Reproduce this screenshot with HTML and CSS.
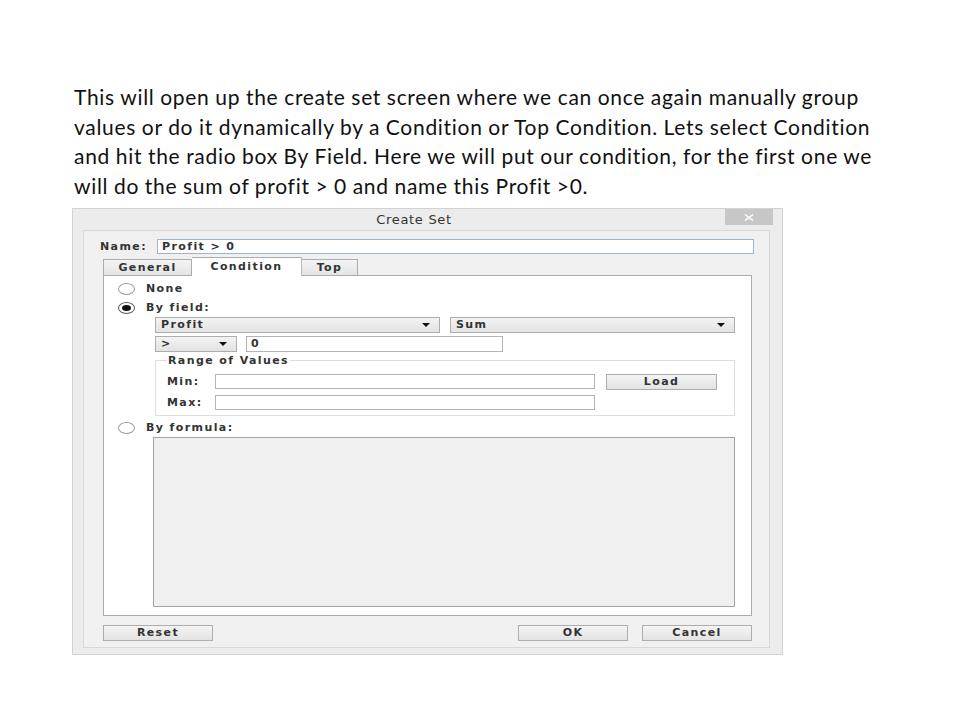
FILE: index.html
```html
<!DOCTYPE html>
<html>
<head>
<meta charset="utf-8">
<link rel="stylesheet" href="styles.css">
</head>
<body>
<p class="caption">
<span>This will open up the create set screen where we can once again manually group</span>
<span>values or do it dynamically by a Condition or Top Condition. Lets select Condition</span>
<span>and hit the radio box By Field. Here we will put our condition, for the first one we</span>
<span>will do the sum of profit &gt; 0 and name this Profit &gt;0.</span>
</p>
<div class="dialog">
  <div class="titlebar">
    <span class="title">Create Set</span>
    <span class="close"><svg width="10" height="7" viewBox="0 0 10 7"><path d="M1 0.5 L9 6.5 M9 0.5 L1 6.5" stroke="#fff" stroke-width="1.4" fill="none"/></svg></span>
  </div>
  <div class="client">
    <div class="name-row">
      <span class="name-label">Name:</span>
      <div class="input name-input">Profit &gt; 0</div>
    </div>
    <div class="tabs">
      <div class="tab tab-general">General</div>
      <div class="tab tab-condition active">Condition</div>
      <div class="tab tab-top">Top</div>
    </div>
    <div class="panel">
      <div class="radio-row"><span class="radio"></span><span>None</span></div>
      <div class="radio-row"><span class="radio on"></span><span>By field:</span></div>
      <div class="field-row first">
        <div class="select wide">Profit</div>
        <div class="select wide">Sum</div>
      </div>
      <div class="field-row second">
        <div class="select op">&gt;</div>
        <div class="input value">0</div>
      </div>
      <div class="group">
        <span class="group-title">Range of Values</span>
        <div class="range-row">
          <span class="range-label">Min:</span>
          <div class="input range-input"></div>
          <div class="btn load">Load</div>
        </div>
        <div class="range-row">
          <span class="range-label">Max:</span>
          <div class="input range-input"></div>
        </div>
      </div>
      <div class="radio-row formula-row"><span class="radio"></span><span>By formula:</span></div>
      <div class="formula"></div>
    </div>
    <div class="buttons">
      <div class="btn">Reset</div>
      <span class="spacer"></span>
      <div class="btn">OK</div>
      <div class="btn">Cancel</div>
    </div>
  </div>
</div>
</body>
</html>
```
FILE: styles.css
```css
* { box-sizing: border-box; }
body { margin: 0; background: #fff; }

.caption {
  margin: 82px 0 0 74px;
  font-family: Lato, "Open Sans", sans-serif;
  font-size: 21px;
  letter-spacing: 0.7px;
  word-spacing: -0.3px;
  line-height: 29.6px;
  color: #111;
}
.caption span { display: block; white-space: nowrap; }

.dialog {
  margin: 8px 0 0 72px;
  width: 711px;
  height: 447px;
  background: #ececec;
  border: 1px solid #d2d2d2;
  display: flex;
  flex-direction: column;
  font-family: "DejaVu Sans", sans-serif;
  font-size: 11px;
  font-weight: bold;
  color: #333;
  letter-spacing: 1.4px;
}

.titlebar { height: 21px; display: flex; align-items: flex-start; }
.title {
  flex: 1;
  text-align: center;
  padding-left: 30px;
  font-weight: normal;
  font-size: 13px;
  line-height: 21px;
  letter-spacing: 0.7px;
  color: #333;
}
.close {
  width: 48px;
  height: 16px;
  margin-right: 9px;
  background: #c7c7c7;
  display: flex;
  align-items: center;
  justify-content: center;
}

.client {
  flex: 1;
  margin: 0 12px 6px 10px;
  background: #f0f0f0;
  border: 1px solid #d8d8d8;
  padding: 8px 17px 0 19px;
  display: flex;
  flex-direction: column;
}

.name-row { display: flex; height: 15px; margin-left: -3px; margin-right: -2px; align-items: center; }
.name-label { width: 57px; line-height: 15px; }
.input {
  height: 15px;
  background: #fff;
  border: 1px solid #b4b4b4;
  padding: 0 4px;
  line-height: 13px;
}
.name-input { flex: 1; border-color: #a3b4c9; }

.tabs { display: flex; align-items: flex-end; height: 18px; margin-top: 3px; }
.tab {
  height: 16px;
  border: 1px solid #acacac;
  border-bottom: none;
  background: linear-gradient(#f4f4f4, #e4e4e4);
  text-align: center;
  line-height: 15px;
}
.tab-general { width: 89px; }
.tab-condition { width: 110px; border-left: none; }
.tab-top { width: 56px; border-left: none; }
.tab.active {
  height: 19px;
  margin-bottom: -1px;
  background: #fff;
  border-right-color: #b8b8b8;
  line-height: 17px;
  position: relative;
  z-index: 1;
}

.panel {
  height: 341px;
  background: #fff;
  border: 1px solid #acacac;
  padding: 3px 16px 0 14px;
  display: flex;
  flex-direction: column;
}

.radio-row { display: flex; align-items: center; height: 19px; gap: 11px; }
.radio {
  width: 17px;
  height: 12px;
  border-radius: 50%;
  border: 1px solid #9a9a9a;
  background: #fff;
  display: flex;
  align-items: center;
  justify-content: center;
}
.radio.on { border-color: #5a5a5a; }
.radio.on::after {
  content: "";
  width: 9px;
  height: 6px;
  border-radius: 50%;
  background: #111;
}

.field-row { display: flex; margin-left: 37px; height: 16px; }
.field-row.second { margin-top: 3px; gap: 9px; }
.field-row.first { gap: 10px; }

.select {
  height: 16px;
  border: 1px solid #adadad;
  background: linear-gradient(#f3f3f3, #e3e3e3);
  display: flex;
  align-items: center;
  justify-content: space-between;
  padding: 0 9px 0 5px;
  line-height: 14px;
}
.select::after {
  content: "";
  width: 0;
  height: 0;
  border-left: 4px solid transparent;
  border-right: 4px solid transparent;
  border-top: 4px solid #111;
}
.select.wide { flex: 1; }
.select.op { width: 82px; }
.input.value { width: 257px; height: 16px; line-height: 14px; }

.group {
  margin: 8px 0 0 37px;
  border: 1px solid #dedede;
  padding: 0 0 5px 11px;
  display: flex;
  flex-direction: column;
}
.group-title {
  align-self: flex-start;
  margin: -7px 0 0 0;
  padding: 0 1px;
  background: #fff;
  line-height: 14px;
}
.range-row { display: flex; align-items: flex-start; margin-top: 6px; height: 15px; }
.range-label { width: 48px; line-height: 15px; }
.range-input { width: 380px; }
.btn {
  height: 16px;
  width: 110px;
  border: 1px solid #adadad;
  background: linear-gradient(#f4f4f4, #e3e3e3);
  text-align: center;
  line-height: 14px;
}
.btn.load { width: 111px; margin-left: 11px; }

.formula-row { margin-top: 2px; }
.formula {
  margin-left: 35px;
  height: 170px;
  border: 1px solid #a4a4a4;
  background: #f0f0f0;
}

.buttons { display: flex; margin-top: 9px; gap: 14px; }
.spacer { flex: 1; }
```
